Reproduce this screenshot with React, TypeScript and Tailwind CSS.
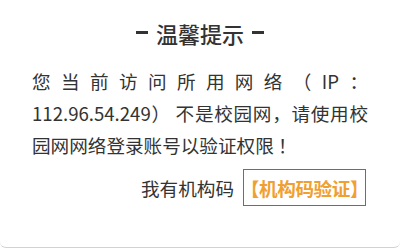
import React from "react";

const cjk = "font-['Noto_Sans_CJK_SC','Noto_Sans',sans-serif]";

function Notice() {
  return (
    <div className={`w-[400px] h-[248px] bg-white rounded-b-[6px] border-b border-[#cfd3d6] flex flex-col ${cjk}`}>
      <div className="pt-[17px] h-[48px] flex items-center justify-center gap-[8px] text-[22px] leading-[28px] font-medium text-[#333]">
        <span className="inline-block w-[12px] h-[3px] bg-[#333]"></span>
        <span>温馨提示</span>
        <span className="inline-block w-[12px] h-[3px] bg-[#333]"></span>
      </div>
      <p className="mt-[17px] px-[32px] text-[18.6px] leading-[32px] text-[#333] text-justify [text-spacing-trim:space-all]" lang="zh-CN">
        您当前访问所用网络（IP：112.96.54.249） 不是校园网，请使用校园网网络登录账号以验证权限 ！
      </p>
      <div className="mt-[8px] pr-[34px] flex items-center justify-end gap-[9px] text-[18.6px] text-[#333]">
        <span>我有机构码</span>
        <a className="w-[123px] h-[37px] border border-[#d9413f] flex items-center justify-center whitespace-nowrap text-[18.6px] font-semibold text-[#f0a030] tracking-[-0.4px]">
          【机构码验证】
        </a>
      </div>
    </div>
  );
}

export default function App() {
  return <Notice />;
}
